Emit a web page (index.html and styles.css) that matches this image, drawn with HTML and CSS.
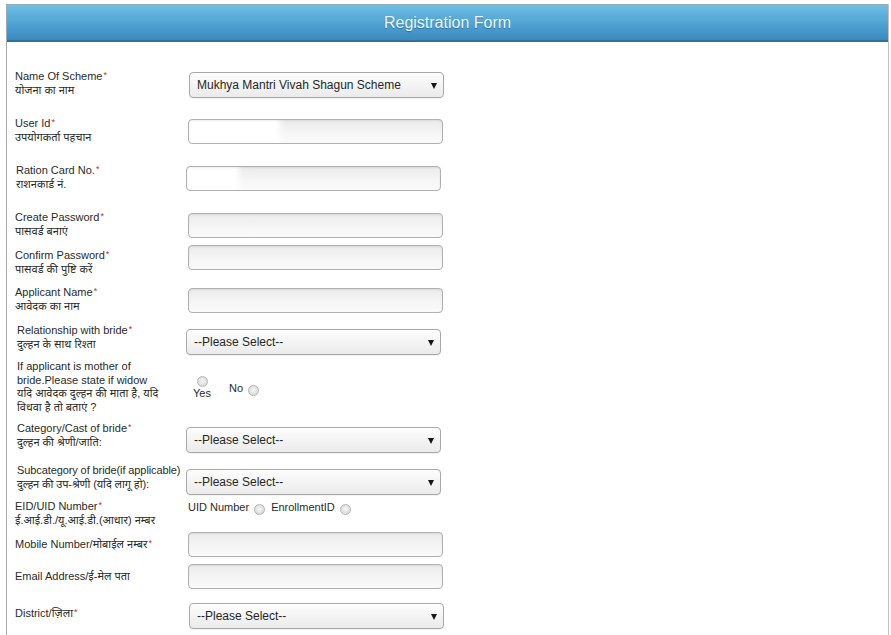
FILE: index.html
```html
<!DOCTYPE html>
<html lang="hi">
<head>
<meta charset="utf-8">
<title>Registration Form</title>
<link rel="stylesheet" href="styles.css">
</head>
<body>
<div class="panel">
  <h1 class="panel__title">Registration Form</h1>
  <form class="form">
    <div class="row">
      <label class="label">Name Of Scheme<span class="req">*</span><br>योजना का नाम</label>
      <div class="select select--nudge"><span class="select__text">Mukhya Mantri Vivah Shagun Scheme</span><i class="caret"></i></div>
    </div>

    <div class="row gap-21">
      <label class="label">User Id<span class="req">*</span><br>उपयोगकर्ता पहचान</label>
      <input class="field field--filled" type="text">
    </div>

    <div class="row row--shift gap-22">
      <label class="label">Ration Card No.<span class="req">*</span><br>राशनकार्ड नं.</label>
      <input class="field field--filled-short" type="text">
    </div>

    <div class="row gap-22">
      <label class="label">Create Password<span class="req">*</span><br>पासवर्ड बनाएं</label>
      <input class="field" type="password">
    </div>

    <div class="row gap-7">
      <label class="label label--drop">Confirm Password<span class="req">*</span><br>पासवर्ड की पुष्टि करें</label>
      <input class="field" type="password">
    </div>

    <div class="row gap-12">
      <label class="label">Applicant Name<span class="req">*</span><br>आवेदक का नाम</label>
      <input class="field" type="text">
    </div>

    <div class="row row--alt gap-16">
      <label class="label">Relationship with bride<span class="req">*</span><br>दुल्हन के साथ रिश्ता</label>
      <div class="select"><span class="select__text">--Please Select--</span><i class="caret"></i></div>
    </div>

    <div class="row row--alt-label gap-5">
      <label class="label label--flat">If applicant is mother of<br>bride.Please state if widow<br>यदि आवेदक दुल्हन की माता है, यदि<br>विधवा है तो बताएं ?</label>
      <div class="choices">
        <label class="choice choice--stacked"><input class="radio" type="radio" name="widow"><span>Yes</span></label>
        <label class="choice choice--inline"><span>No</span><input class="radio" type="radio" name="widow"></label>
      </div>
    </div>

    <div class="row row--alt gap-13">
      <label class="label">Category/Cast of bride<span class="req">*</span><br>दुल्हन की श्रेणी/जाति:</label>
      <div class="select"><span class="select__text">--Please Select--</span><i class="caret"></i></div>
    </div>

    <div class="row row--alt gap-16">
      <label class="label label--tight">Subcategory of bride(if applicable)<br>दुल्हन की उप-श्रेणी (यदि लागू हो):</label>
      <div class="select"><span class="select__text">--Please Select--</span><i class="caret"></i></div>
    </div>

    <div class="row gap-5">
      <label class="label label--flat">EID/UID Number<span class="req">*</span><br>ई.आई.डी./यू.आई.डी.(आधार) नम्बर</label>
      <div class="id-choices">
        <label class="choice choice--inline"><span>UID Number</span><input class="radio" type="radio" name="idtype"></label>
        <label class="choice choice--inline"><span>EnrollmentID</span><input class="radio" type="radio" name="idtype"></label>
      </div>
    </div>

    <div class="row row--center gap-5">
      <label class="label label--flat">Mobile Number/मोबाईल नम्बर<span class="req">*</span></label>
      <input class="field" type="text">
    </div>

    <div class="row row--center gap-7">
      <label class="label label--flat">Email Address/ई-मेल पता</label>
      <input class="field" type="text">
    </div>

    <div class="row gap-14">
      <label class="label label--drop">District/ज़िला<span class="req">*</span></label>
      <div class="select select--nudge"><span class="select__text">--Please Select--</span><i class="caret"></i></div>
    </div>
  </form>
</div>
</body>
</html>
```

FILE: styles.css
```css
html, body {
  margin: 0;
  padding: 0;
  background: #ffffff;
}

body {
  font-family: "Liberation Sans", Arial, "Noto Sans", sans-serif;
  color: #333333;
  font-size: 11px;
}

.panel {
  margin: 4px 2px 0 6px;
  min-height: 640px;
  border-left: 1px solid #a8a8a8;
  border-right: 1px solid #c4c4c4;
  box-sizing: border-box;
}

.panel__title {
  margin: 0;
  height: 38px;
  box-sizing: border-box;
  padding-top: 1px;
  border-top: 1px solid #97aab8;
  border-bottom: 2px solid #2e6f9c;
  background: linear-gradient(to bottom, #6cbfe4 0%, #55a7d5 45%, #3a89c1 100%);
  color: #eaf6fc;
  font-family: "Liberation Sans", Arial, sans-serif;
  font-weight: normal;
  font-size: 16px;
  line-height: 34px;
  text-align: center;
  text-shadow: 0 1px 1px rgba(0, 40, 80, 0.35);
}

.form {
  padding: 30px 0 0 8px;
}

.row {
  display: flex;
  align-items: flex-start;
}

.row--center {
  align-items: center;
}

.gap-5 { margin-top: 5px; }
.gap-7 { margin-top: 7px; }
.gap-12 { margin-top: 12px; }
.gap-13 { margin-top: 13px; }
.gap-14 { margin-top: 14px; }
.gap-16 { margin-top: 16px; }
.gap-21 { margin-top: 21px; }
.gap-22 { margin-top: 22px; }

.label {
  width: 173px;
  flex: none;
  margin-top: -2px;
  line-height: 13.5px;
  font-size: 11px;
  color: #2a2a2a;
}

.label--drop {
  margin-top: 4px;
}

.label--flat {
  margin-top: 0;
}

.row--alt .label {
  margin-top: -5px;
  padding-left: 2px;
  width: 171px;
}

.row--alt .label--tight {
  letter-spacing: -0.1px;
}

.row--alt .select {
  margin-left: -2px;
}

.row--alt-label .label {
  padding-left: 2px;
  width: 171px;
}

.row--shift .label {
  padding-left: 1px;
  width: 170px;
}

.req {
  color: #d21f1f;
  font-size: 9px;
  vertical-align: top;
  line-height: 11px;
  margin-left: 1px;
}

.field {
  width: 255px;
  height: 25px;
  box-sizing: border-box;
  margin: 0;
  padding: 0 6px;
  border: 1px solid #b0b0b0;
  border-radius: 4px;
  background: linear-gradient(to bottom, #ebebeb 0%, #f6f6f6 60%, #fafafa 100%);
  box-shadow: inset 0 1px 2px rgba(0, 0, 0, 0.08);
  font: inherit;
  outline: none;
}

.field--filled {
  background:
    linear-gradient(to right, #ffffff 0, #ffffff 86px, rgba(255, 255, 255, 0) 96px),
    linear-gradient(to bottom, #ebebeb 0%, #f6f6f6 60%, #fafafa 100%);
}

.field--filled-short {
  background:
    linear-gradient(to right, #ffffff 0, #ffffff 48px, rgba(255, 255, 255, 0) 56px),
    linear-gradient(to bottom, #ebebeb 0%, #f6f6f6 60%, #fafafa 100%);
}

.select {
  width: 255px;
  height: 26px;
  box-sizing: border-box;
  display: flex;
  align-items: center;
  justify-content: space-between;
  padding: 0 6px 0 7px;
  border: 1px solid #a8a8a8;
  border-radius: 4px;
  background: linear-gradient(to bottom, #fdfdfd 0%, #f3f3f3 55%, #ebebeb 100%);
  box-shadow: 0 1px 1px rgba(0, 0, 0, 0.06);
}

.select--nudge {
  margin-left: 1px;
}

.select__text {
  font-size: 12px;
  color: #262626;
  white-space: nowrap;
}

.caret {
  width: 0;
  height: 0;
  border-left: 3px solid transparent;
  border-right: 3px solid transparent;
  border-top: 6px solid #151515;
  margin-top: 1px;
}

.choices {
  display: flex;
  align-items: flex-start;
  padding-left: 4px;
}

.choice {
  display: flex;
  align-items: center;
  font-size: 11px;
  color: #2a2a2a;
}

.choice--stacked {
  flex-direction: column;
  margin-top: 16px;
  width: 20px;
}

.choice--stacked span {
  line-height: 13px;
}

.choices .choice--inline {
  margin-left: 17px;
  margin-top: 20px;
}

.choices .choice--inline .radio {
  margin-top: 5px;
}

.choice--inline .radio {
  margin-left: 5px;
}

.id-choices {
  display: flex;
  align-items: flex-start;
  line-height: 13px;
}

.id-choices .choice--inline + .choice--inline {
  margin-left: 6px;
}

.id-choices .radio {
  margin-top: 4px;
}

.radio {
  -webkit-appearance: none;
  appearance: none;
  width: 11px;
  height: 11px;
  margin: 0;
  padding: 0;
  box-sizing: border-box;
  border: 1px solid #b6b6b6;
  border-radius: 50%;
  background: radial-gradient(circle at 50% 45%, #f6f6f6 0%, #e2e2e2 55%, #cfcfcf 100%);
  flex: none;
}
```
